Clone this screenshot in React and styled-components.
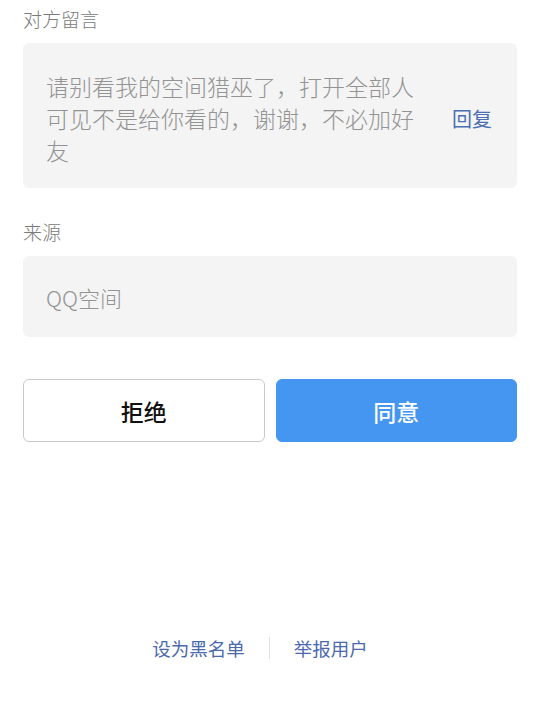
import styled, { createGlobalStyle } from "styled-components"

const Global = createGlobalStyle`
  html, body {
    margin: 0;
    padding: 0;
    background: #fff;
    font-family: "Noto Sans CJK SC", "Noto Sans", sans-serif;
  }
`

const Page = styled.div`
  display: flex;
  flex-direction: column;
  padding: 6px 23px 0 23px;
  height: 704px;
  box-sizing: border-box;
`

const Label = styled.div`
  font-size: 19px;
  line-height: 26px;
  font-weight: 300;
  color: #7a7a7a;
  margin-top: ${p => p.$top || 0}px;
`

const Card = styled.div`
  display: flex;
  align-items: center;
  justify-content: space-between;
  margin-top: 11px;
  background: #f4f4f4;
  border-radius: 6px;
  box-sizing: border-box;
  padding: ${p => p.$pad};
  min-height: ${p => p.$h}px;
`

const Message = styled.div`
  width: 372px;
  font-size: 23px;
  line-height: 32px;
  font-weight: 300;
  color: #939393;
`

const Reply = styled.span`
  font-size: 20px;
  color: #4b6fb3;
`

const Source = styled.div`
  font-size: 22px;
  line-height: 32px;
  font-weight: 300;
  color: #939393;
`

const Actions = styled.div`
  display: grid;
  grid-template-columns: 1fr 1fr;
  gap: 11px;
  margin-top: 42px;
`

const Button = styled.button`
  height: 63px;
  border-radius: 6px;
  font-family: inherit;
  font-size: 23px;
  font-weight: 500;
  border: 1px solid ${p => (p.$primary ? "#4596f1" : "#c9c9c9")};
  background: ${p => (p.$primary ? "#4596f1" : "#fff")};
  color: ${p => (p.$primary ? "#fff" : "#111")};
`

const Footer = styled.div`
  display: flex;
  justify-content: center;
  align-items: center;
  gap: 24px;
  margin-top: 194px;
  margin-right: 20px;
  font-size: 18.5px;
  line-height: 24px;
  color: #4b6aad;
`

const Divider = styled.span`
  width: 1px;
  height: 22px;
  background: #e0e0e0;
`

export default function App() {
  return (
    <>
      <Global />
      <Page>
        <Label>对方留言</Label>
        <Card $pad="27px 25px 22px 23px" $h={145}>
          <Message>请别看我的空间猎巫了，打开全部人可见不是给你看的，谢谢，不必加好友</Message>
          <Reply>回复</Reply>
        </Card>
        <Label $top={31}>来源</Label>
        <Card $pad="0 23px" $h={81}>
          <Source>QQ空间</Source>
        </Card>
        <Actions>
          <Button>拒绝</Button>
          <Button $primary>同意</Button>
        </Actions>
        <Footer>
          <span>设为黑名单</span>
          <Divider />
          <span>举报用户</span>
        </Footer>
      </Page>
    </>
  )
}
